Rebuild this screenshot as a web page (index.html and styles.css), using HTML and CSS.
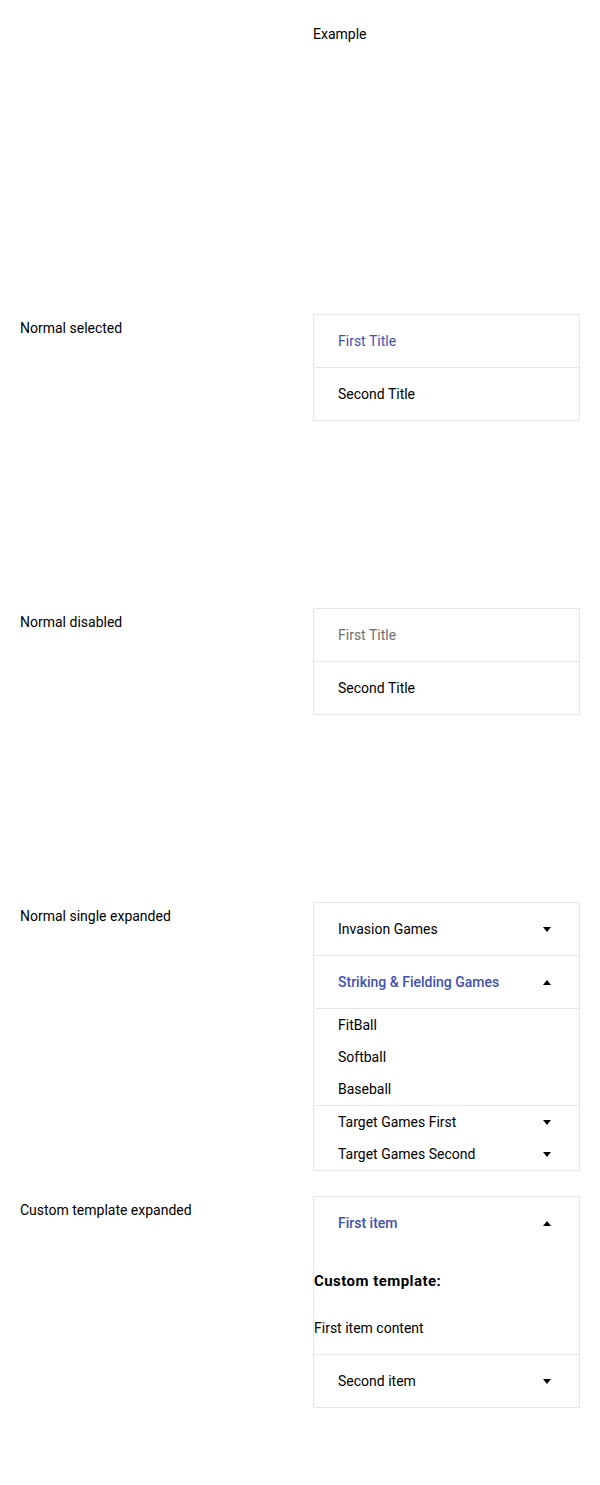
FILE: index.html
```html
<!DOCTYPE html>
<html>
<head>
<meta charset="utf-8">
<link rel="stylesheet" href="styles.css">
</head>
<body>
<div class="page">
  <div class="row">
    <div class="label"></div>
    <div class="example">Example</div>
  </div>

  <div class="row">
    <div class="label">Normal selected</div>
    <div class="panel">
      <div class="head selected"><span>First Title</span></div>
      <div class="head"><span>Second Title</span></div>
    </div>
  </div>

  <div class="row">
    <div class="label">Normal disabled</div>
    <div class="panel">
      <div class="head disabled"><span>First Title</span></div>
      <div class="head"><span>Second Title</span></div>
    </div>
  </div>

  <div class="row">
    <div class="label">Normal single expanded</div>
    <div class="panel">
      <div class="head"><span>Invasion Games</span><i class="arrow down"></i></div>
      <div class="head selected bold"><span>Striking &amp; Fielding Games</span><i class="arrow up"></i></div>
      <div class="children">
        <div class="child"><span>FitBall</span></div>
        <div class="child"><span>Softball</span></div>
        <div class="child"><span>Baseball</span></div>
      </div>
      <div class="child sub"><span>Target Games First</span><i class="arrow down"></i></div>
      <div class="child sub"><span>Target Games Second</span><i class="arrow down"></i></div>
    </div>
  </div>

  <div class="row">
    <div class="label">Custom template expanded</div>
    <div class="panel">
      <div class="head selected bold"><span>First item</span><i class="arrow up"></i></div>
      <div class="custom">
        <h4 class="custom-title">Custom template:</h4>
        <p class="custom-text">First item content</p>
      </div>
      <div class="head"><span>Second item</span><i class="arrow down"></i></div>
    </div>
  </div>
</div>
</body>
</html>
```

FILE: styles.css
```css
html, body {
  margin: 0;
  padding: 0;
  background: #fff;
}
body {
  font-family: Roboto, "Liberation Sans", sans-serif;
  font-size: 14px;
  color: #000;
}
.page {
  padding: 20px 20px 0 20px;
}
.row {
  display: grid;
  grid-template-columns: 293px 267px;
  min-height: 294px;
  align-items: start;
}
.label, .example {
  line-height: 20px;
  margin-top: 4px;
}
.panel {
  border: 1px solid #e6e6e6;
  display: flex;
  flex-direction: column;
}
.head {
  height: 52px;
  display: flex;
  align-items: center;
  justify-content: space-between;
  padding: 0 28px 0 24px;
  border-top: 1px solid #e6e6e6;
}
.head:first-child {
  border-top: none;
}
.selected {
  color: #3f51b5;
}
.bold {
  font-weight: 500;
}
.disabled {
  color: #707070;
}
.children {
  border-top: 1px solid #e6e6e6;
  border-bottom: 1px solid #e6e6e6;
  margin-left: 1px;
}
.child {
  height: 32px;
  display: flex;
  align-items: center;
  justify-content: space-between;
  padding: 0 28px 0 23px;
}
.child.sub {
  padding-left: 24px;
}
.arrow {
  width: 0;
  height: 0;
  border-left: 4px solid transparent;
  border-right: 4px solid transparent;
}
.arrow.down {
  border-top: 5px solid #000;
}
.arrow.up {
  border-bottom: 5px solid #000;
}
.custom {
  padding: 22px 0 16px 0;
}
.custom-title {
  margin: 0;
  font-size: 15px;
  font-weight: 700;
  letter-spacing: 0.45px;
  line-height: 20px;
}
.custom-text {
  margin: 27px 0 0 0;
  line-height: 20px;
}
```
